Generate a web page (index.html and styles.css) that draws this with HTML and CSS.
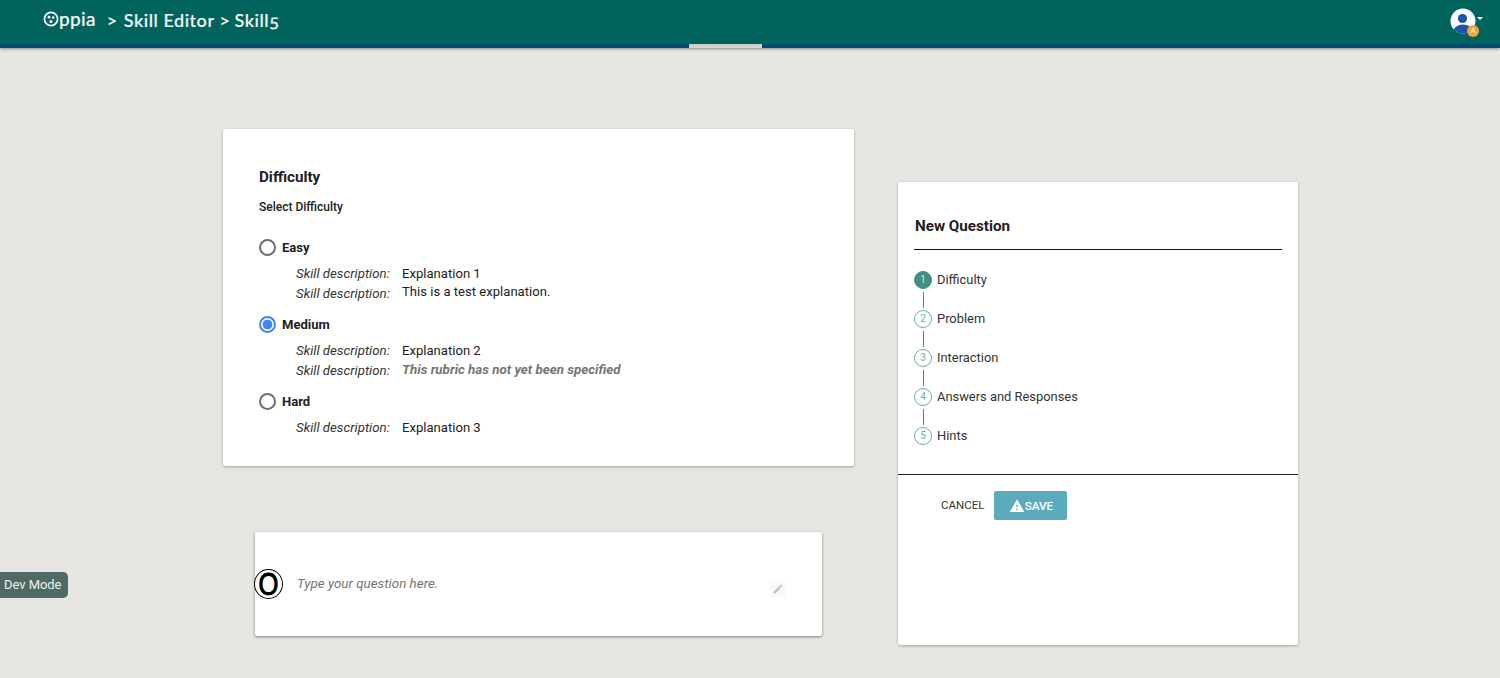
FILE: index.html
```html
<!DOCTYPE html>
<html lang="en">
<head>
<meta charset="utf-8">
<title>Skill Editor</title>
<link rel="stylesheet" href="styles.css">
</head>
<body>
<header class="topbar">
  <div class="crumbs">
    <span class="logo">
      <svg class="logo-mark" viewBox="0 0 16 16" width="16" height="16" aria-hidden="true">
        <circle cx="8" cy="8" r="6.6" fill="none" stroke="#fff" stroke-width="1.7"/>
        <circle cx="6" cy="6.2" r="1.4" fill="#fff"/>
        <circle cx="10.2" cy="6.6" r="1.3" fill="#fff"/>
        <circle cx="8" cy="10.4" r="1.5" fill="#fff"/>
      </svg><span class="logo-text">ppia</span>
    </span>
    <span class="crumb-sep first">&gt;</span>
    <span>Skill Editor</span>
    <span class="crumb-sep">&gt;</span>
    <span class="old-nums">Skill5</span>
  </div>
  <div class="user">
    <svg class="avatar" viewBox="0 0 26 26" width="26" height="26" aria-hidden="true">
      <defs><clipPath id="av"><circle cx="13" cy="13" r="12.5"/></clipPath></defs>
      <circle cx="13" cy="13" r="12.5" fill="#fff"/>
      <circle cx="12.5" cy="10.5" r="4.6" fill="#1a55a8"/>
      <ellipse cx="13" cy="24" rx="10" ry="7.5" fill="#1a55a8" clip-path="url(#av)"/>
    </svg>
    <span class="badge">A</span>
    <span class="caret"></span>
  </div>
</header>
<div class="notch-row"><div class="notch"></div></div>

<main class="page">
  <section class="left">
    <div class="card difficulty">
      <h2 class="title">Difficulty</h2>
      <p class="subtitle">Select Difficulty</p>
      <div class="option">
        <span class="radio"></span><span class="opt-label">Easy</span>
      </div>
      <div class="rubrics">
        <div class="rubric"><em>Skill description:</em><span>Explanation 1</span></div>
        <div class="rubric"><em>Skill description:</em><span class="raised">This is a test explanation.</span></div>
      </div>
      <div class="option">
        <span class="radio on"></span><span class="opt-label">Medium</span>
      </div>
      <div class="rubrics">
        <div class="rubric"><em>Skill description:</em><span>Explanation 2</span></div>
        <div class="rubric"><em>Skill description:</em><strong>This rubric has not yet been specified</strong></div>
      </div>
      <div class="option">
        <span class="radio"></span><span class="opt-label">Hard</span>
      </div>
      <div class="rubrics">
        <div class="rubric"><em>Skill description:</em><span>Explanation 3</span></div>
      </div>
    </div>

    <div class="card question">
      <span class="q-mark"><span class="q-glyph">O</span></span>
      <span class="q-text">Type your question here.</span>
      <span class="edit">
        <svg viewBox="0 0 24 24" width="12" height="12" aria-hidden="true"><path fill="#c4c4c4" d="M3 17.25V21h3.75L17.81 9.94l-3.75-3.75L3 17.25zM20.71 7.04a1 1 0 0 0 0-1.41l-2.34-2.34a1 1 0 0 0-1.41 0l-1.83 1.83 3.75 3.75 1.83-1.83z"/></svg>
      </span>
    </div>
  </section>

  <aside class="card steps">
    <div class="steps-body">
      <h2 class="steps-title"><span class="steps-title-text">New Question</span></h2>
      <ol class="step-list">
        <li class="step active"><span class="num">1</span><span class="step-label">Difficulty</span></li>
        <li class="step"><span class="num">2</span><span class="step-label">Problem</span></li>
        <li class="step"><span class="num">3</span><span class="step-label">Interaction</span></li>
        <li class="step"><span class="num">4</span><span class="step-label">Answers and Responses</span></li>
        <li class="step"><span class="num">5</span><span class="step-label">Hints</span></li>
      </ol>
    </div>
    <div class="actions">
      <button class="btn-cancel" type="button">CANCEL</button>
      <button class="btn-save" type="button">
        <svg viewBox="0 0 24 24" width="16" height="16" aria-hidden="true"><path fill="#fff" d="M1 21h22L12 2 1 21zm12-3h-2v-2h2v2zm0-4h-2v-4h2v4z"/></svg>
        SAVE
      </button>
    </div>
  </aside>
</main>

<div class="devmode">Dev Mode</div>
</body>
</html>
```

FILE: styles.css
```css
* { box-sizing: border-box; }
html, body { height: 100%; }
body {
  margin: 0;
  background: #e8e6e2;
  font-family: Roboto, "Liberation Sans", sans-serif;
  color: #212121;
  overflow: hidden;
}
.topbar {
  height: 48px;
  background: #00645c;
  border-bottom: 4px solid #014a73;
  box-shadow: 0 1px 3px rgba(0,0,0,.4);
  display: flex;
  align-items: flex-start;
  justify-content: space-between;
  padding: 0 16px 0 43px;
  color: #fff;
}
.crumbs {
  display: flex;
  align-items: baseline;
  font-family: Lato, "Open Sans", sans-serif;
  font-size: 18px;
  font-weight: 500;
  letter-spacing: .55px;
  line-height: 24px;
  padding-top: 8px;
  color: #f2f6f5;
  -webkit-text-stroke: .2px #f2f6f5;
}
.logo { display: inline-flex; align-items: center; margin-top: -1px; }
.logo-text { font-size: 19px; letter-spacing: .3px; }
.crumb-sep { margin: 0 5px; }
.crumb-sep.first { margin: 0 6px 0 11px; }
.old-nums { font-variant-numeric: oldstyle-nums; margin-left: -1px; }
.user { position: relative; width: 34px; height: 34px; margin-top: 8px; }
.avatar { display: block; }
.badge {
  position: absolute;
  left: 17px;
  top: 17px;
  width: 12px;
  height: 12px;
  border-radius: 50%;
  background: #f5a33c;
  color: #fff;
  font-size: 8px;
  line-height: 12px;
  text-align: center;
}
.caret {
  position: absolute;
  left: 27px;
  top: 9px;
  border-left: 3.5px solid transparent;
  border-right: 3.5px solid transparent;
  border-top: 3.5px solid #fff;
}
.notch-row { height: 0; position: relative; }
.notch {
  position: absolute;
  left: 689px;
  top: -4px;
  width: 73px;
  height: 4px;
  background: linear-gradient(#c6c7c0, #dcdbd6);
}
.page {
  display: flex;
  align-items: flex-start;
  padding: 81px 0 0 223px;
  gap: 44px;
}
.left { width: 631px; flex: none; }
.card {
  background: #fff;
  border-radius: 2px;
  box-shadow: 0 1px 3px rgba(0,0,0,.3);
}
.difficulty { height: 337px; padding: 38px 36px 0; }
.title {
  margin: 0;
  font-size: 15.2px;
  font-weight: 700;
  line-height: 20px;
}
.subtitle {
  margin: 11px 0 0;
  font-size: 12px;
  font-weight: 500;
  line-height: 18px;
}
.option {
  display: flex;
  align-items: center;
  height: 20px;
  margin-top: 21px;
}
.rubrics + .option { margin-top: 11px; }
.radio {
  width: 17px;
  height: 17px;
  border-radius: 50%;
  border: 2px solid #6f6f6f;
  margin-right: 6px;
  flex: none;
}
.radio.on {
  border-color: #4285f4;
  background: radial-gradient(circle, #4285f4 0 4.6px, #fff 5.2px);
}
.opt-label { font-size: 13px; font-weight: 700; }
.rubrics { padding: 7px 0 0 37px; }
.rubric {
  display: flex;
  font-size: 13.1px;
  line-height: 19.5px;
  height: 19.5px;
}
.rubric em { width: 106px; flex: none; font-size: 13.25px; font-style: italic; color: #333; }
.rubric .raised { margin-top: -2px; }
.rubric strong { font-style: italic; font-weight: 700; font-size: 13.35px; color: #757575; margin-top: -1px; }
.question {
  position: relative;
  margin: 66px 0 0 32px;
  width: 567px;
  height: 104px;
  display: flex;
  align-items: center;
  padding-right: 36px;
  box-shadow: 0 1px 3px rgba(0,0,0,.45);
}
.q-mark {
  display: flex;
  align-items: center;
  justify-content: center;
  width: 29px;
  height: 30px;
  flex: none;
  margin-left: -1px;
  border: 1px solid #000;
  border-radius: 50%;
  margin-right: 14px;
}
.q-glyph {
  display: block;
  font-family: "Liberation Sans", sans-serif;
  font-size: 32px;
  line-height: 28px;
  color: #000;
  -webkit-text-stroke: 1px #000;
  transform: scaleX(.8);
}
.q-text {
  flex: 1;
  font-size: 13.4px;
  font-style: italic;
  color: #757575;
  margin-top: -1px;
}
.edit {
  width: 16px;
  height: 16px;
  background: #f9f9f9;
  display: flex;
  align-items: center;
  justify-content: center;
  margin-top: 10px;
}
.steps { width: 400px; height: 463px; margin-top: 53px; flex: none; }
.steps-body { height: 293px; padding: 34px 16px 0 16px; border-bottom: 1px solid #212121; }
.steps-title {
  margin: 0;
  height: 34px;
  font-size: 15.2px;
  font-weight: 700;
  line-height: 20px;
  border-bottom: 1px solid #111;
  width: 368px;
}
.steps-title-text { padding-left: 1px; }
.step-list { list-style: none; margin: 21px 0 0; padding: 0; }
.step {
  position: relative;
  display: flex;
  align-items: center;
  height: 18px;
  margin-bottom: 21px;
  font-size: 12.9px;
  color: #333;
}
.step-label { padding-bottom: 2px; }
.step:not(:last-child)::after {
  content: "";
  position: absolute;
  left: 8.5px;
  top: 21px;
  width: 1px;
  height: 16px;
  background: #3f9080;
}
.num {
  width: 18px;
  height: 18px;
  flex: none;
  border: 1px solid #6ab0a3;
  border-radius: 50%;
  margin-right: 5px;
  font-size: 10px;
  line-height: 16px;
  text-align: center;
  color: #6ab0a3;
  background: #fff;
}
.active .num { background: #3f9080; border-color: #3f9080; color: #cfe6e1; }
.actions {
  display: flex;
  align-items: center;
  padding: 16px 0 0 43px;
}
.btn-cancel {
  border: 0;
  background: none;
  padding: 0 0 2px;
  font: 400 11.5px Roboto, sans-serif;
  color: #333;
  margin-right: 10px;
}
.btn-save {
  display: flex;
  align-items: center;
  gap: 0;
  height: 29px;
  width: 73px;
  justify-content: center;
  border: 0;
  border-radius: 2px;
  background: #5aacbd;
  color: #fff;
  font: 500 11.7px Roboto, sans-serif;
}
.devmode {
  position: absolute;
  left: 0;
  top: 572px;
  width: 68px;
  height: 26px;
  background: #4f6a66;
  border-radius: 0 5px 5px 0;
  color: #eef2f1;
  font-size: 12.9px;
  line-height: 26px;
  padding-left: 4px;
}
```
